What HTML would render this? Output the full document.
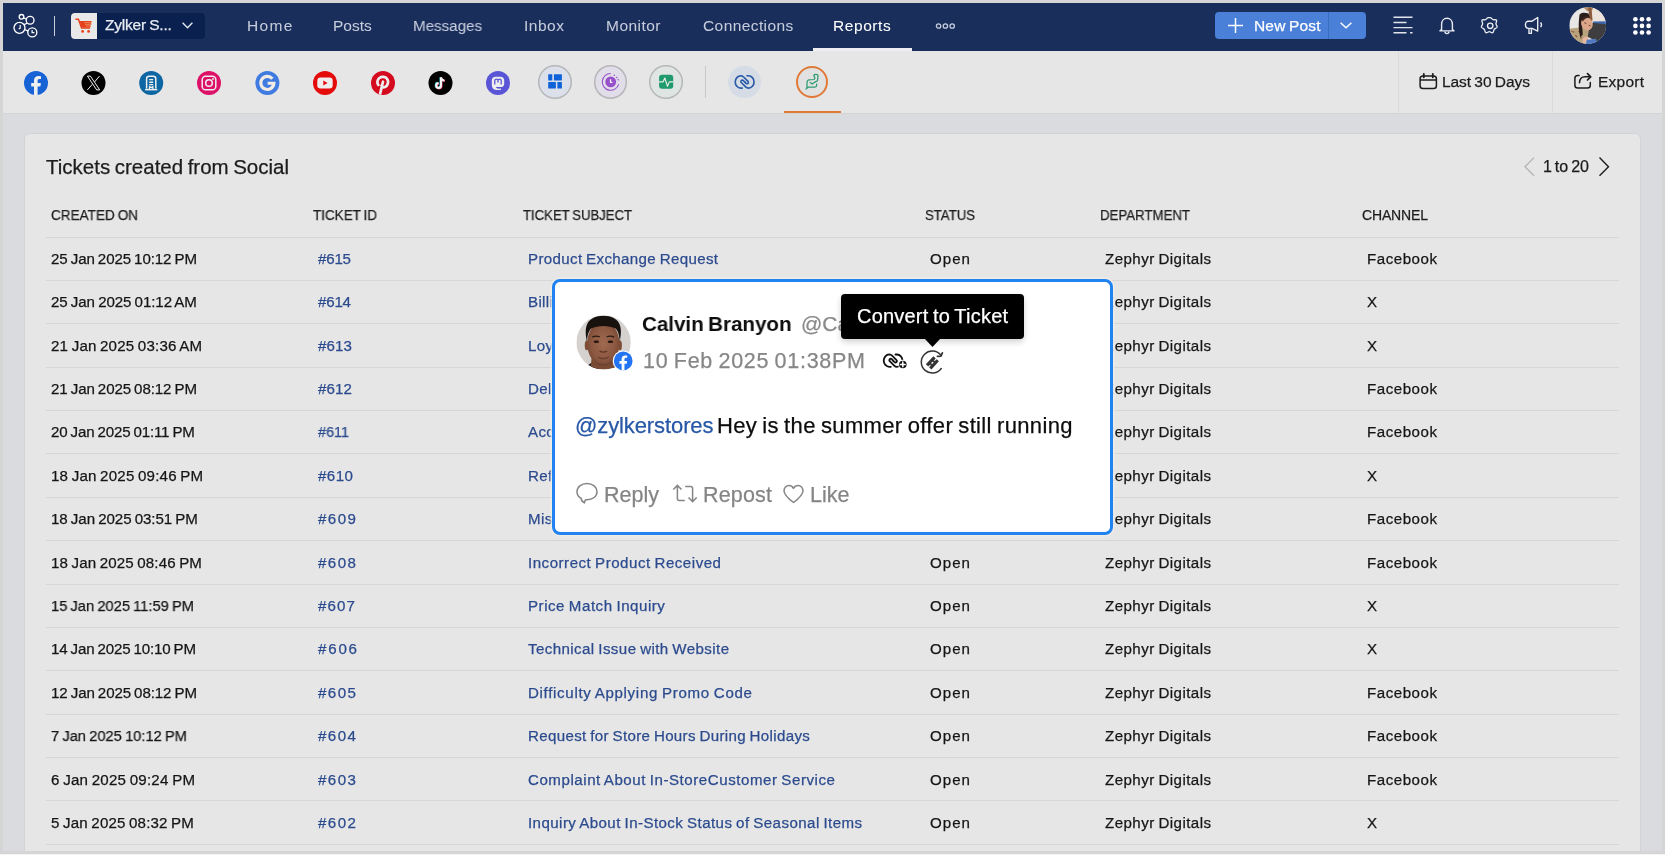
<!DOCTYPE html>
<html lang="en"><head>
<meta charset="utf-8">
<title>Zoho Social - Reports</title>
<style>
*{box-sizing:border-box;margin:0;padding:0}
html,body{width:1665px;height:855px;overflow:hidden}
body{background:#dadbde;font-family:"Liberation Sans",sans-serif;position:relative;color:#1c1c1c}
#root{position:absolute;left:0;top:0;width:1665px;height:855px}
.abs{position:absolute}
.t{word-spacing:-.06em;will-change:transform;-webkit-text-stroke:.25px;position:absolute;white-space:nowrap;line-height:20px;height:20px;margin-top:-10px;transform-origin:0 50%}
.frame{position:absolute;background:#d5d5d5;z-index:50}
#nav{position:absolute;left:0;top:0;width:1665px;height:50.5px;background:#1a2e5b}
#tool{position:absolute;left:0;top:50.5px;width:1665px;height:63.500px;background:#e6e6e6;border-bottom:1px solid #d4d4d7}
#card{position:absolute;left:25px;top:133.5px;width:1615px;height:740px;background:#e6e6e6;border-radius:5px;box-shadow:0 0 0 1px rgba(0,0,0,.035)}
.nv{color:#c5ccdc;font-size:15.5px;-webkit-text-stroke:.05px}
.hd{font-size:14px;color:#1f1f1f}
.sep{position:absolute;left:46px;width:1573px;height:1px;background:#d6d6d6}
.c{font-size:15.100px;color:#151515;letter-spacing:.35px}
.lk{color:#2c4b8e}
svg{position:absolute;overflow:visible}
</style>
</head>
<body>
<div id="root">
<div class="frame" style="left:0;top:0;width:1665px;height:3px"></div>
<div class="frame" style="left:0;top:851px;width:1665px;height:4px"></div>
<div class="frame" style="left:0;top:854px;width:1665px;height:1px;background:#f4f4f4;z-index:51"></div>
<div class="frame" style="left:0;top:0;width:3px;height:855px"></div>
<div class="frame" style="left:1662px;top:0;width:3px;height:855px"></div>

<div id="nav"></div>
<!-- logo -->
<svg style="left:12px;top:13px" width="27" height="25" viewBox="0 0 27 25" fill="none" stroke="#fff" stroke-width="1.350">
<circle cx="9.500" cy="3.800" r="2.300"></circle><circle cx="18.100" cy="7.200" r="3.900"></circle><circle cx="7.500" cy="14.800" r="5.500"></circle><circle cx="20.300" cy="19.400" r="4.500"></circle>
<path d="M11.600 4.900l2.900 1.100M12.600 16.500l3.600 1.600M15.200 10.200l-3.200 1.400" stroke-width="1.200"></path>
<path d="M8.200 12v3.200l-1.500.8M20.100 16.900v2.700h2.300" stroke-width="1.200"></path>
</svg>
<div class="abs" style="left:53.5px;top:15.5px;width:1.3px;height:20px;background:#c9cfdd"></div>
<!-- brand -->
<div class="abs" style="left:71px;top:12.5px;width:134px;height:26px;background:#0a2150;border-radius:4px"></div>
<div class="abs" style="left:71px;top:12.5px;width:25.5px;height:26px;background:#e9e9e9;border-radius:4px 0 0 4px"></div>
<svg style="left:75px;top:18px" width="18" height="16" viewBox="0 0 18 16">
<path d="M0.4 1.2h3l3.2 8.8h8.4" fill="none" stroke="#e5401b" stroke-width="1.5"></path>
<path d="M4.6 3h12l-1.4 6.6H6.6z" fill="#e5401b"></path>
<path d="M9 4.6h8M10 6.3h7M11 8h5" stroke="#f0a070" stroke-width=".7"></path>
<circle cx="7.6" cy="13.4" r="1.4" fill="#e5401b"></circle><circle cx="13.6" cy="13.4" r="1.4" fill="#e5401b"></circle>
</svg>
<span class="t" style="left: 105px; top: 24.5px; font-size: 15.5px; color: rgb(232, 235, 242); letter-spacing: -0.2px;">Zylker S...</span>
<svg style="left:182px;top:22px" width="11" height="7" viewBox="0 0 11 7" fill="none" stroke="#e3e7ef" stroke-width="1.4"><path d="M.6.8l4.9 5 4.9-5"></path></svg>
<!-- menu -->
<span class="t nv" style="left: 246.5px; top: 25.5px; letter-spacing: 1.38px;">Home</span>
<span class="t nv" style="left: 333px; top: 25.5px; letter-spacing: -0.02px;">Posts</span>
<span class="t nv" style="left: 413px; top: 25.5px; letter-spacing: 0px; transform: scaleX(0.977);">Messages</span>
<span class="t nv" style="left: 524px; top: 25.5px; letter-spacing: 0.52px;">Inbox</span>
<span class="t nv" style="left: 605.5px; top: 25.5px; letter-spacing: 0.47px;">Monitor</span>
<span class="t nv" style="left: 702.5px; top: 25.5px; letter-spacing: 0.41px;">Connections</span>
<span class="t nv" style="left: 833.4px; top: 25.5px; color: rgb(255, 255, 255); letter-spacing: 0.57px;">Reports</span>
<div class="abs" style="left:813px;top:48px;width:99px;height:2.5px;background:#eceef2"></div>
<svg style="left:935px;top:22px" width="21" height="8" viewBox="0 0 21 8" fill="none" stroke="#c5ccdc" stroke-width="1.3"><circle cx="3.6" cy="4" r="2.2"></circle><circle cx="10.4" cy="4" r="2.2"></circle><circle cx="17.2" cy="4" r="2.2"></circle></svg>
<!-- new post -->
<div class="abs" style="left:1215px;top:12.300px;width:151px;height:26.800px;background:#4a80d8;border-radius:4px"></div>
<div class="abs" style="left:1328px;top:12.300px;width:1px;height:26.800px;background:#3a6cc0"></div>
<svg style="left:1228px;top:18px" width="15" height="15" viewBox="0 0 15 15" stroke="#fff" stroke-width="1.5"><path d="M7.5 0v15M0 7.5h15"></path></svg>
<span class="t" style="left: 1254px; top: 25.5px; font-size: 15.5px; color: rgb(255, 255, 255); letter-spacing: 0.16px;">New Post</span>
<svg style="left:1340px;top:22px" width="12" height="7" viewBox="0 0 12 7" fill="none" stroke="#fff" stroke-width="1.4"><path d="M.6.8l5.4 5 5.4-5"></path></svg>
<!-- list -->
<svg style="left: 1393px; top: 16px;" width="20" height="18" viewBox="-0.5 -0.3 20 18" stroke="#e3e6ee" stroke-width="1.400"><path d="M0 1h19M0 6.200h13M0 11.300h19M0 16.400h13M16.600 16.400h2.400"></path></svg>
<!-- bell -->
<svg style="left:1438px;top:16px" width="18" height="19" viewBox="0 0 18 19" fill="none" stroke="#e8ebf2" stroke-width="1.4" stroke-linejoin="round"><path d="M3.6 13.6V8.2c0-3.4 2.3-5.9 5.4-5.9s5.4 2.500 5.400 5.900v5.400l1.600 1.300H2z"></path><path d="M7 15.600c0 1.200.9 2 2 2s2-.8 2-2"></path></svg>
<!-- gear -->
<svg style="left: 1480px; top: 16px;" width="19" height="19" viewBox="-0.7 -0.3 19 19" fill="none" stroke="#e8ebf2" stroke-width="1.4" stroke-linejoin="round"><path d="M9.500 1.100c1.300 0 1.800 1.900 3 2.300 1.200.4 2.900-.6 3.600.500.700 1.100-.6 2.500-.6 3.700 0 1.200 1.600 2.400 1.300 3.600-.4 1.200-2.300 1.300-3.100 2.300-.8 1-.4 2.900-1.600 3.500-1.200.500-2.300-1-3.600-1s-2.400 1.500-3.600 1c-1.200-.6-.8-2.500-1.600-3.500s-2.700-1.100-3.100-2.300c-.3-1.200 1.300-2.400 1.300-3.600 0-1.200-1.300-2.600-.6-3.700.7-1.100 2.400-.1 3.600-.5 1.200-.4 1.700-2.300 3-2.300z" transform="translate(.5 .2) scale(.95)"></path><circle cx="9.500" cy="9.500" r="2.700"></circle></svg>
<!-- megaphone -->
<svg style="left:1524px;top:16px" width="20" height="19" viewBox="0 0 20 19" fill="none" stroke="#e8ebf2" stroke-width="1.400" stroke-linejoin="round"><path d="M13.700 1.500v13.600L8 12.400H4.300C2.600 12.400 1.500 11 1.500 9.300v-1c0-1.700 1.100-3.100 2.800-3.100H8z"></path><path d="M5 12.600v4.800h2.400v-4.600M16.600 6.300c.9 1.200.9 3.600 0 4.800"></path></svg>
<!-- avatar -->
<svg style="left: 1569px; top: 7px;" width="37" height="37" viewBox="-0.3 -0.2 37 37">
<defs><clipPath id="avc"><circle cx="18.400" cy="18.400" r="18.400"></circle></clipPath></defs>
<g clip-path="url(#avc)"><rect width="37" height="37" fill="#e9e7e5"></rect>
<rect x="22" y="0" width="15" height="16" fill="#ece3db"></rect>
<path d="M14 0h10l-1 3-5 1z" fill="#b08a62"></path>
<path d="M19 0h3.200l1 13.500h-3.200z" fill="#8d5b3d"></path>
<path d="M0 21.500l12-1.500 8 3-1 8-5 6H0z" fill="#b9a37e"></path>
<path d="M2 24l3 1M6 28l2 2M11 31l2-1M4 31l1 2M9 24l2 1" stroke="#8a5a3a" stroke-width="1.200"></path>
<path d="M23.500 14.300l13.500-.3v3l-13 0z" fill="#3f68b0"></path>
<path d="M23.200 15.500l14 1.500v14l-8.500 4-10.300-5.500 1.200-6.500z" fill="#3e3e40"></path>
<path d="M10.200 7.500c1.500-2 5-2.300 9-1.200l1.300 4.500-6 2.500-1.500 7 .5 7-2.500 3c-1.500-6-2-12-1.300-18z" fill="#2a1c18"></path>
<ellipse cx="17.600" cy="16.600" rx="5.600" ry="6.600" fill="#dda68a" transform="rotate(-28 17.600 16.600)"></ellipse>
<path d="M12.500 11.500c2-2.500 5.500-3.600 8-1.500-3 .3-5.500 1.600-7 4.500z" fill="#3a2620"></path>
<path d="M15 15.500l2 .8M19.500 18l1.800.8" stroke="#5a3528" stroke-width=".9"></path>
<path d="M13.500 30.500l4.500-1.500 1 3-3 5h-3z" fill="#e6b79c"></path>
<path d="M17.500 32.500l9-1 2 5.500H16.500z" fill="#4f7ac2"></path>
</g></svg>
<!-- grid -->
<svg style="left:1632px;top:16px" width="20" height="20" viewBox="0 0 20 20" fill="#fff"><circle cx="3.400" cy="3.300" r="2.300"></circle><circle cx="10" cy="3.300" r="2.300"></circle><circle cx="16.600" cy="3.300" r="2.300"></circle><circle cx="3.400" cy="9.900" r="2.300"></circle><circle cx="10" cy="9.900" r="2.300"></circle><circle cx="16.600" cy="9.900" r="2.300"></circle><circle cx="3.400" cy="16.500" r="2.300"></circle><circle cx="10" cy="16.500" r="2.300"></circle><circle cx="16.600" cy="16.500" r="2.300"></circle></svg>
<!--NAVEND-->
<div id="tool">

</div>
<div id="card"></div>
<!--TOOLITEMS-->
<!-- facebook -->
<svg style="left:24px;top:71px" width="24" height="24" viewBox="0 0 24 24"><circle cx="12" cy="12" r="12" fill="#1763d6"></circle><path d="M13.600 24v-8.600h2.800l.5-3.300h-3.300V9.900c0-1 .5-1.800 1.900-1.800h1.500V5.300s-1.300-.3-2.600-.3c-2.700 0-4.400 1.700-4.400 4.500v2.600H7.200v3.300H10V24z" fill="#eee"></path></svg>
<!-- x -->
<svg style="left: 81px; top: 71px;" width="24" height="24" viewBox="-0.5 0 24 24"><circle cx="12" cy="12" r="12" fill="#000"></circle><path d="M5.900 5.100h3l9.300 13.800h-3zM18 5.100l-5 5.900M10.800 13.300L5.900 18.900" fill="none" stroke="#eee" stroke-width="1"></path></svg>
<!-- linkedin/company -->
<svg style="left: 139px; top: 71px;" width="24" height="24" viewBox="-0.2 0 24 24"><circle cx="12" cy="12" r="12" fill="#0b66a3"></circle><path d="M7.400 17.600V7.700c0-1.500 1-2.500 2.500-2.500h4.200c1.500 0 2.500 1 2.500 2.500v9.900" fill="none" stroke="#eee" stroke-width="1.500"></path><path d="M5.900 18.600h12.200" stroke="#eee" stroke-width="1.600"></path><path d="M10.300 18v-2.400l1.700 1 1.700-1V18" fill="none" stroke="#eee" stroke-width="1.200"></path><path d="M10 8.600h4M10 11.200h4M10 13.600h4" stroke="#eee" stroke-width="1.400"></path></svg>
<!-- instagram -->
<svg style="left:197px;top:71px" width="24" height="24" viewBox="0 0 24 24"><circle cx="12" cy="12" r="12" fill="#dd1168"></circle><rect x="5.200" y="5.200" width="13.600" height="13.600" rx="3.400" fill="none" stroke="#eee" stroke-width="1.500"></rect><circle cx="12" cy="12" r="3.300" fill="none" stroke="#eee" stroke-width="1.500"></circle><circle cx="16" cy="8" r=".95" fill="#eee"></circle></svg>
<!-- google -->
<svg style="left: 255px; top: 71px;" width="24" height="24" viewBox="-0.4 0 24 24"><circle cx="12" cy="12" r="12" fill="#3f7be0"></circle><path d="M17 7.700A6.550 6.550 0 1 0 18.500 12.300H12.200" fill="none" stroke="#f3ece4" stroke-width="3.100"></path></svg>
<!-- youtube -->
<svg style="left:313px;top:71px" width="24" height="24" viewBox="0 0 24 24"><circle cx="12" cy="12" r="12" fill="#e60b0b"></circle><rect x="4.300" y="6.600" width="15.400" height="11" rx="3.300" fill="#eee"></rect><path d="M10.300 9.500v4.900l4.300-2.450z" fill="#e60b0b"></path></svg>
<!-- pinterest -->
<svg style="left:371px;top:71px" width="24" height="24" viewBox="0 0 24 24"><defs><clipPath id="pnc"><circle cx="12" cy="12" r="12"></circle></clipPath></defs><circle cx="12" cy="12" r="12" fill="#d40a1f"></circle><g clip-path="url(#pnc)"><path d="M8.800 24l3.200-13.300M7.300 13.900c-1.500-2-1.100-5.200 1.100-6.900 2.500-1.900 6.500-1.400 8 1.300 1.400 2.600.3 6.700-2.400 7.700-1.600.6-3-.1-3.500-1.200" fill="none" stroke="#eee" stroke-width="2.700" stroke-linecap="round"></path></g></svg>
<!-- tiktok -->
<svg style="left:428px;top:71px" width="24" height="24" viewBox="-.5 0 24 24"><circle cx="12" cy="12" r="12" fill="#000"></circle><g fill="none" stroke-width="2"><path d="M12.500 6.300v8.300a2.400 2.400 0 1 1-2.400-2.400M12.500 6.500c.3 1.900 1.500 3 3.400 3.100" stroke="#35d0e0" transform="translate(-.5 -.4)"></path><path d="M12.500 6.300v8.300a2.400 2.400 0 1 1-2.400-2.400M12.500 6.500c.3 1.900 1.500 3 3.400 3.100" stroke="#f0406a" transform="translate(.5 .4)"></path><path d="M12.500 6.300v8.300a2.400 2.400 0 1 1-2.400-2.400M12.500 6.500c.3 1.900 1.500 3 3.400 3.100" stroke="#f5f5f5"></path></g></svg>
<!-- mastodon -->
<svg style="left:486px;top:71px" width="24" height="24" viewBox="0 0 24 24"><circle cx="12" cy="12" r="12" fill="#5a55d6"></circle><path d="M5.800 9.400c0-2.300 1.500-3.700 3.800-3.700h4.800c2.300 0 3.800 1.400 3.800 3.700v3.500c0 2-1.300 3.200-3.400 3.200h-4.900c.3 1.400 1.800 1.800 5.100 1.500v1.100c-4.900.9-9.200.2-9.200-5.300z" fill="#eee"></path><path d="M8.800 13.400V9.600c0-1.900 3.200-1.900 3.200 0v1.900m0-1.900c0-1.900 3.200-1.900 3.200 0v3.800" fill="none" stroke="#5a55d6" stroke-width="1.300"></path></svg>
<!-- dashboards -->
<div class="abs" style="left:538.100px;top:64.900px;width:33.700px;height:33.700px;border-radius:50%;background:#dbe0ea;box-shadow:inset 0 0 0 1.500px #b6b6b8"></div>
<svg style="left:548px;top:74px" width="14" height="15" viewBox="0 0 14 15" fill="#0f62d8"><rect x=".2" y=".2" width="4.100" height="6.200" rx=".5"></rect><rect x="5.900" y=".2" width="8" height="6.200" rx=".5"></rect><rect x=".2" y="7.900" width="7.700" height="6.500" rx=".5"></rect><rect x="9.400" y="7.900" width="4.500" height="6.500" rx=".5"></rect></svg>
<div class="abs" style="left:593.800px;top:64.900px;width:33.700px;height:33.700px;border-radius:50%;background:#e2dee9;box-shadow:inset 0 0 0 1.500px #b6b6b8"></div>
<svg style="left:602px;top:73px" width="18" height="18" viewBox="0 0 18 18"><circle cx="8.700" cy="8.900" r="5.400" fill="#9650cc"></circle><path d="M8.700 .5A8.400 8.400 0 1 0 16.700 11.400" fill="none" stroke="#9650cc" stroke-width="1.100"></path><circle cx="12.300" cy="2.300" r=".75" fill="#9650cc"></circle><circle cx="14.700" cy="4.400" r=".75" fill="#9650cc"></circle><circle cx="16.200" cy="6.800" r=".75" fill="#9650cc"></circle><path d="M8.500 6.300v3h2" fill="none" stroke="#eee" stroke-width="1.300"></path></svg>
<div class="abs" style="left:649.100px;top:64.900px;width:33.700px;height:33.700px;border-radius:50%;background:#dee5e2;box-shadow:inset 0 0 0 1.500px #b6b6b8"></div>
<svg style="left: 659px; top: 74px;" width="15" height="15" viewBox="0 -0.7 15 15"><rect x=".1" y="0" width="14.100" height="14.100" rx="2.800" fill="#1f9a6c"></rect><path d="M0 7.200h4l1.800-3.900 2.700 8.400 1.800-4.500h4" fill="none" stroke="#e6ebe8" stroke-width="1.200" stroke-linejoin="round"></path></svg>
<div class="abs" style="left:705px;top:66px;width:1.200px;height:31.500px;background:#c9c9c9"></div>
<!-- link -->
<div class="abs" style="left:728px;top:65.500px;width:32.500px;height:32.500px;border-radius:50%;background:#d5dce6"></div>
<svg style="left:732px;top:72px" width="25" height="20" viewBox="0 0 25 20" fill="none" stroke="#2a5aa8" stroke-width="1.650" stroke-linecap="round" stroke-linejoin="round"><path id="lkh" d="M10.300 16.100H8.800A5.800 6.180 0 0 1 8.800 3.750C10 3.750 10.800 4.200 11.600 5L16 9.400A1.380 1.380 0 0 1 14.050 11.360L12.630 9.940"></path><use href="#lkh" transform="rotate(180 12.630 9.940)"></use></svg>
<!-- active -->
<div class="abs" style="left:796px;top:65.500px;width:32.300px;height:32.500px;border-radius:50%;background:#e1e1e1;border:2px solid #e07a38"></div>
<svg style="left:792px;top:62px" width="40" height="40" viewBox="0 0 40 40" fill="none" stroke="#2e9c72" stroke-width="1.250" stroke-linejoin="round" stroke-linecap="round"><path d="M22 13.300C22.300 12.600 23 12.300 23.900 12.300 25.300 12.300 26.100 13 26 14.200L25.500 18.300C25.300 19.200 24.500 19.500 23.600 19.600"></path><path d="M22 13.300C21.800 14.300 22.300 15 22.900 15.700 22.900 16.800 22.500 17.400 21.600 17.500L16.800 17.900C15.800 18 15.300 18.600 15.100 19.800L14.900 25.500 14 27 16.400 25H23C24 25 24.600 24.400 24.600 23.500V22"></path><path d="M18.200 20.400L20.200 22 23.600 19.600"></path></svg>
<div class="abs" style="left:784px;top:110.500px;width:57px;height:2.500px;background:#e27a35"></div>
<!-- right -->
<div class="abs" style="left:1398px;top:51px;width:1px;height:62.500px;background:#dadada"></div>
<div class="abs" style="left:1552px;top:51px;width:1px;height:62.500px;background:#dadada"></div>
<svg style="left:1414px;top:68px" width="30" height="28" viewBox="0 0 30 28" fill="none" stroke="#1c1c1c" stroke-width="1.500" stroke-linecap="round"><rect x="6.100" y="7.900" width="16.300" height="12.600" rx="2.800"></rect><path d="M6.100 12H22.400" stroke-linecap="butt"></path><path d="M9.800 5.800V9.300M18.800 5.800V9.300" stroke-width="1.800"></path></svg>
<span class="t" style="left: 1442px; top: 82px; font-size: 15.5px; color: rgb(28, 28, 28); letter-spacing: -0.06px;">Last 30 Days</span>
<svg style="left:1568px;top:68px" width="30" height="28" viewBox="0 0 30 28" fill="none" stroke="#1c1c1c" stroke-width="1.500" stroke-linecap="round" stroke-linejoin="round"><path d="M11.100 7.400H9.700C8 7.400 6.900 8.500 6.900 10.200V17.200C6.900 18.900 8 20 9.700 20H19.500C21.200 20 22.300 18.900 22.300 17.200V14.400"></path><path d="M11.500 14.700C11.700 11 13.600 8.800 17 8.800H22"></path><path d="M19.500 5.600L22.700 8.800 19.500 12" stroke-width="1.700"></path></svg>
<span class="t" style="left: 1598px; top: 82px; font-size: 15.5px; color: rgb(28, 28, 28); letter-spacing: 0.24px;">Export</span>
<!--TOOLEND-->
<!--TABLE-->
<span class="t" style="left: 46px; top: 166.8px; font-size: 20.5px; color: rgb(28, 28, 28); letter-spacing: 0.01px;">Tickets created from Social</span>
<svg style="left:1524px;top:157px" width="11" height="20" viewBox="0 0 11 20" fill="none" stroke="#b4b4b4" stroke-width="1.300"><path d="M10 .6L1 9.700l9 9.100"></path></svg>
<span class="t" style="left: 1543px; top: 166.6px; font-size: 16px; word-spacing: -0.1em; color: rgb(28, 28, 28); letter-spacing: 0.04px;">1 to 20</span>
<svg style="left: 1598px; top: 157px;" width="11" height="20" viewBox="-0.5 0 11 20" fill="none" stroke="#1c1c1c" stroke-width="1.400"><path d="M1 .6l9 9.100-9 9.100"></path></svg>
<span class="t hd" style="left: 51px; top: 214.8px; letter-spacing: 0px; transform: scaleX(0.968);">CREATED ON</span>
<span class="t hd" style="left: 313px; top: 214.8px; letter-spacing: 0px; transform: scaleX(0.961);">TICKET ID</span>
<span class="t hd" style="left: 523px; top: 214.8px; letter-spacing: 0px; transform: scaleX(0.937);">TICKET SUBJECT</span>
<span class="t hd" style="left: 925px; top: 214.8px; letter-spacing: 0px; transform: scaleX(0.941);">STATUS</span>
<span class="t hd" style="left: 1100px; top: 214.8px; letter-spacing: 0px; transform: scaleX(0.946);">DEPARTMENT</span>
<span class="t hd" style="left: 1362px; top: 214.8px; letter-spacing: -0.15px;">CHANNEL</span>
<div class="sep" style="top:236.55px"></div>
<span class="t c" style="left: 51px; top: 259.3px; letter-spacing: -0.12px;">25 Jan 2025 10:12 PM</span>
<span class="t c lk" style="left: 318px; top: 259.3px; letter-spacing: -0.19px;">#615</span>
<span class="t c lk" style="left: 528px; top: 259.3px; letter-spacing: 0.35px;">Product Exchange Request</span>
<span class="t c" style="left: 930px; top: 259.3px; letter-spacing: 1.02px;">Open</span>
<span class="t c" style="left: 1105px; top: 259.3px; letter-spacing: 0.45px;">Zephyr Digitals</span>
<span class="t c" style="left: 1367px; top: 259.3px; letter-spacing: 0.53px;">Facebook</span>
<div class="sep" style="top:279.93px"></div>
<span class="t c" style="left: 51px; top: 301.67px; letter-spacing: -0.08px;">25 Jan 2025 01:12 AM</span>
<span class="t c lk" style="left: 318px; top: 301.67px; letter-spacing: -0.19px;">#614</span>
<span class="t c lk" style="left:528px;top:301.67px">Billing Discrepancy on Order</span>
<span class="t c" style="left: 930px; top: 301.67px; letter-spacing: 1.02px;">Open</span>
<span class="t c" style="left: 1105px; top: 301.67px; letter-spacing: 0.45px;">Zephyr Digitals</span>
<span class="t c" style="left: 1367px; top: 301.67px; letter-spacing: -0.08px;">X</span>
<div class="sep" style="top:323.3px"></div>
<span class="t c" style="left: 51px; top: 346.05px; letter-spacing: 0.19px;">21 Jan 2025 03:36 AM</span>
<span class="t c lk" style="left: 318px; top: 346.05px; letter-spacing: 0.14px;">#613</span>
<span class="t c lk" style="left:528px;top:346.05px">Loyalty Points Not Credited</span>
<span class="t c" style="left: 930px; top: 346.05px; letter-spacing: 1.02px;">Open</span>
<span class="t c" style="left: 1105px; top: 346.05px; letter-spacing: 0.45px;">Zephyr Digitals</span>
<span class="t c" style="left: 1367px; top: 346.05px; letter-spacing: -0.08px;">X</span>
<div class="sep" style="top:366.68px"></div>
<span class="t c" style="left: 51px; top: 389.43px; letter-spacing: -0.12px;">21 Jan 2025 08:12 PM</span>
<span class="t c lk" style="left: 318px; top: 389.43px; letter-spacing: 0.14px;">#612</span>
<span class="t c lk" style="left:528px;top:389.43px">Delayed Delivery Complaint</span>
<span class="t c" style="left: 930px; top: 389.43px; letter-spacing: 1.02px;">Open</span>
<span class="t c" style="left: 1105px; top: 389.43px; letter-spacing: 0.45px;">Zephyr Digitals</span>
<span class="t c" style="left: 1367px; top: 389.43px; letter-spacing: 0.53px;">Facebook</span>
<div class="sep" style="top:410.05px"></div>
<span class="t c" style="left: 51px; top: 431.8px; letter-spacing: -0.17px;">20 Jan 2025 01:11 PM</span>
<span class="t c lk" style="left: 318px; top: 431.8px; letter-spacing: 0px; transform: scaleX(0.955);">#611</span>
<span class="t c lk" style="left:528px;top:431.8px">Account Login Problem</span>
<span class="t c" style="left: 930px; top: 431.8px; letter-spacing: 1.02px;">Open</span>
<span class="t c" style="left: 1105px; top: 431.8px; letter-spacing: 0.45px;">Zephyr Digitals</span>
<span class="t c" style="left: 1367px; top: 431.8px; letter-spacing: 0.53px;">Facebook</span>
<div class="sep" style="top:453.43px"></div>
<span class="t c" style="left: 51px; top: 476.17px; letter-spacing: 0.2px;">18 Jan 2025 09:46 PM</span>
<span class="t c lk" style="left: 318px; top: 476.17px; letter-spacing: 0.47px;">#610</span>
<span class="t c lk" style="left:528px;top:476.17px">Refund Status Enquiry</span>
<span class="t c" style="left: 930px; top: 476.17px; letter-spacing: 1.02px;">Open</span>
<span class="t c" style="left: 1105px; top: 476.17px; letter-spacing: 0.45px;">Zephyr Digitals</span>
<span class="t c" style="left: 1367px; top: 476.17px; letter-spacing: -0.08px;">X</span>
<div class="sep" style="top:496.8px"></div>
<span class="t c" style="left: 51px; top: 518.55px; letter-spacing: -0.07px;">18 Jan 2025 03:51 PM</span>
<span class="t c lk" style="left: 318px; top: 518.55px; letter-spacing: 1.47px;">#609</span>
<span class="t c lk" style="left:528px;top:518.55px">Missing Item in Package</span>
<span class="t c" style="left: 930px; top: 518.55px; letter-spacing: 1.02px;">Open</span>
<span class="t c" style="left: 1105px; top: 518.55px; letter-spacing: 0.45px;">Zephyr Digitals</span>
<span class="t c" style="left: 1367px; top: 518.55px; letter-spacing: 0.53px;">Facebook</span>
<div class="sep" style="top:540.17px"></div>
<span class="t c" style="left: 51px; top: 562.93px; letter-spacing: 0.14px;">18 Jan 2025 08:46 PM</span>
<span class="t c lk" style="left: 318px; top: 562.93px; letter-spacing: 1.47px;">#608</span>
<span class="t c lk" style="left: 528px; top: 562.93px; letter-spacing: 0.51px;">Incorrect Product Received</span>
<span class="t c" style="left: 930px; top: 562.93px; letter-spacing: 1.02px;">Open</span>
<span class="t c" style="left: 1105px; top: 562.93px; letter-spacing: 0.45px;">Zephyr Digitals</span>
<span class="t c" style="left: 1367px; top: 562.93px; letter-spacing: 0.53px;">Facebook</span>
<div class="sep" style="top:583.55px"></div>
<span class="t c" style="left: 51px; top: 606.3px; letter-spacing: 0px; transform: scaleX(0.972);">15 Jan 2025 11:59 PM</span>
<span class="t c lk" style="left: 318px; top: 606.3px; letter-spacing: 1.14px;">#607</span>
<span class="t c lk" style="left: 528px; top: 606.3px; letter-spacing: 0.53px;">Price Match Inquiry</span>
<span class="t c" style="left: 930px; top: 606.3px; letter-spacing: 1.02px;">Open</span>
<span class="t c" style="left: 1105px; top: 606.3px; letter-spacing: 0.45px;">Zephyr Digitals</span>
<span class="t c" style="left: 1367px; top: 606.3px; letter-spacing: -0.08px;">X</span>
<div class="sep" style="top:626.92px"></div>
<span class="t c" style="left: 51px; top: 648.67px; letter-spacing: -0.17px;">14 Jan 2025 10:10 PM</span>
<span class="t c lk" style="left: 318px; top: 648.67px; letter-spacing: 1.81px;">#606</span>
<span class="t c lk" style="left: 528px; top: 648.67px; letter-spacing: 0.41px;">Technical Issue with Website</span>
<span class="t c" style="left: 930px; top: 648.67px; letter-spacing: 1.02px;">Open</span>
<span class="t c" style="left: 1105px; top: 648.67px; letter-spacing: 0.45px;">Zephyr Digitals</span>
<span class="t c" style="left: 1367px; top: 648.67px; letter-spacing: -0.08px;">X</span>
<div class="sep" style="top:670.3px"></div>
<span class="t c" style="left: 51px; top: 693.05px; letter-spacing: -0.12px;">12 Jan 2025 08:12 PM</span>
<span class="t c lk" style="left: 318px; top: 693.05px; letter-spacing: 1.47px;">#605</span>
<span class="t c lk" style="left: 528px; top: 693.05px; letter-spacing: 0.68px;">Difficulty Applying Promo Code</span>
<span class="t c" style="left: 930px; top: 693.05px; letter-spacing: 1.02px;">Open</span>
<span class="t c" style="left: 1105px; top: 693.05px; letter-spacing: 0.45px;">Zephyr Digitals</span>
<span class="t c" style="left: 1367px; top: 693.05px; letter-spacing: 0.53px;">Facebook</span>
<div class="sep" style="top:713.67px"></div>
<span class="t c" style="left: 51px; top: 736.43px; letter-spacing: 0px; transform: scaleX(0.972);">7 Jan 2025 10:12 PM</span>
<span class="t c lk" style="left: 318px; top: 736.43px; letter-spacing: 1.47px;">#604</span>
<span class="t c lk" style="left: 528px; top: 736.43px; letter-spacing: 0.34px;">Request for Store Hours During Holidays</span>
<span class="t c" style="left: 930px; top: 736.43px; letter-spacing: 1.02px;">Open</span>
<span class="t c" style="left: 1105px; top: 736.43px; letter-spacing: 0.45px;">Zephyr Digitals</span>
<span class="t c" style="left: 1367px; top: 736.43px; letter-spacing: 0.53px;">Facebook</span>
<div class="sep" style="top:757.05px"></div>
<span class="t c" style="left: 51px; top: 779.8px; letter-spacing: 0.23px;">6 Jan 2025 09:24 PM</span>
<span class="t c lk" style="left: 318px; top: 779.8px; letter-spacing: 1.47px;">#603</span>
<span class="t c lk" style="left: 528px; top: 779.8px; letter-spacing: 0.54px;">Complaint About In-StoreCustomer Service</span>
<span class="t c" style="left: 930px; top: 779.8px; letter-spacing: 1.02px;">Open</span>
<span class="t c" style="left: 1105px; top: 779.8px; letter-spacing: 0.45px;">Zephyr Digitals</span>
<span class="t c" style="left: 1367px; top: 779.8px; letter-spacing: 0.53px;">Facebook</span>
<div class="sep" style="top:800.42px"></div>
<span class="t c" style="left: 51px; top: 823.17px; letter-spacing: 0.17px;">5 Jan 2025 08:32 PM</span>
<span class="t c lk" style="left: 318px; top: 823.17px; letter-spacing: 1.47px;">#602</span>
<span class="t c lk" style="left: 528px; top: 823.17px; letter-spacing: 0.43px;">Inquiry About In-Stock Status of Seasonal Items</span>
<span class="t c" style="left: 930px; top: 823.17px; letter-spacing: 1.02px;">Open</span>
<span class="t c" style="left: 1105px; top: 823.17px; letter-spacing: 0.45px;">Zephyr Digitals</span>
<span class="t c" style="left: 1367px; top: 823.17px; letter-spacing: -0.08px;">X</span>
<div class="sep" style="top:843.8px"></div>
<!--TABLEEND-->
<!--POPUP-->
<div class="abs" style="left:552px;top:279px;width:561px;height:256px;background:#fff;border:3px solid #2182f2;border-radius:8px;box-shadow:0 0 0 1.500px rgba(242,236,228,.85)"></div>
<!-- avatar -->
<svg style="left: 576px; top: 315px;" width="55" height="55" viewBox="-0.397 -0.199 54.6 54.6">
<defs><clipPath id="pvc"><circle cx="27" cy="27" r="27"></circle></clipPath>
<radialGradient id="fcg" cx=".5" cy=".5" r=".6"><stop offset="0" stop-color="#a06a50"></stop><stop offset=".6" stop-color="#8c5841"></stop><stop offset="1" stop-color="#70432f"></stop></radialGradient></defs>
<g clip-path="url(#pvc)"><rect width="54" height="54" fill="#d4d1ce"></rect>
<path d="M9 54c1-4 4-6.500 9-7.500l4 7.500z" fill="#1c1c1e"></path>
<path d="M45 54c-1-4-3-6-7-7l-3 7z" fill="#1c1c1e"></path>
<path d="M15.500 38h22.500l1 16H14z" fill="#7a4a35"></path>
<ellipse cx="10.300" cy="30" rx="2" ry="4.800" fill="#7d4c37"></ellipse><ellipse cx="43.200" cy="30" rx="2" ry="4.800" fill="#7d4c37"></ellipse>
<ellipse cx="26.700" cy="28" rx="16" ry="22" fill="url(#fcg)"></ellipse>
<path d="M10.400 26C8.500 17 8.500 9 14 4.500 18 1.300 22 .5 26.700.5s9 .8 12.800 4C45 9 45 17 43 26c-.4-5.500-1.300-9.500-3.700-12.500-7.500-3.800-17.500-3.800-25 0-2.400 3-3.500 7-3.900 12.500z" fill="#18120f"></path>
<path d="M15.800 21.800c2-1.200 5-1.300 7.500-.4M30 21.400c2.500-.9 5.500-.8 7.500.4" stroke="#2a1a14" stroke-width="1.300" fill="none"></path>
<ellipse cx="19.800" cy="26.300" rx="2.700" ry="1.200" fill="#23150f"></ellipse><ellipse cx="33.800" cy="26.300" rx="2.700" ry="1.200" fill="#23150f"></ellipse>
<path d="M23 35.500c2 1.600 5.500 1.600 7.500 0" stroke="#5b3424" stroke-width="1.300" fill="none"></path>
<path d="M21.500 41.500c3 1.800 7.500 1.800 10.500 0-2 2.400-8.500 2.400-10.500 0z" fill="#c48878" stroke="#5b3424" stroke-width=".7"></path>
<path d="M17 44c4 6 15 6 19.500 0-3 8-16 8-19.500 0z" fill="#5b3626" opacity=".55"></path>
</g></svg>
<svg style="left: 612px; top: 350px;" width="21" height="21" viewBox="-0.667 -0.381 20 20"><circle cx="10" cy="10" r="10" fill="#fff"></circle><circle cx="10" cy="10" r="8.900" fill="#2374f2"></circle><path d="M11.200 19v-6.400h2.100l.4-2.500h-2.500V8.500c0-.8.400-1.400 1.500-1.400h1.100V5s-1-.2-2-.2c-2 0-3.300 1.300-3.300 3.400v1.900H6.400v2.500h2.100V19z" fill="#fff"></path></svg>
<span class="t" style="left: 641.5px; top: 324px; font-size: 21px; font-weight: bold; -webkit-text-stroke: 0px; color: rgb(13, 13, 13); height: 28px; line-height: 28px; margin-top: -14px; letter-spacing: 0px; transform: scaleX(0.979);">Calvin Branyon</span>
<span class="t" style="left:800.500px;top:324px;font-size:21px;color:#8a8a8a;height:28px;line-height:28px;margin-top:-14px">@Calvin</span>
<span class="t" style="left: 642.5px; top: 361.4px; font-size: 21.5px; color: rgb(134, 134, 134); height: 28px; line-height: 28px; margin-top: -14px; letter-spacing: 0.73px;">10 Feb 2025 01:38PM</span>
<!-- link+ icon -->
<svg style="left: 880px; top: 350px;" width="28" height="20" viewBox="-0.5 -0.7 28 20" fill="none" stroke="#111" stroke-width="1.800" stroke-linecap="round" stroke-linejoin="round"><use href="#lkh"></use><use href="#lkh" transform="rotate(180 12.630 9.940)"></use><circle cx="22.300" cy="13.700" r="4.700" fill="#fff" stroke="none"></circle><circle cx="22.300" cy="13.700" r="3.750" fill="#111" stroke="none"></circle><path d="M22.300 11.400v4.600M20 13.700h4.600" stroke="#fff" stroke-width="1.500"></path></svg>
<!-- convert icon -->
<svg style="left:920px;top:350px" width="24" height="25" viewBox="0 0 24 25" fill="none" stroke="#333" stroke-width="1.500" stroke-linecap="round" stroke-linejoin="round"><path d="M20.780 5.080A11 11 0 1 0 21.230 18.520"></path><path d="M22.400 2.900L21 6.200 17.400 6.400" stroke-width="1.700"></path><g transform="translate(12.400 12.800) rotate(-47) translate(-5.500 -3.800)"><path d="M0 0H11V3.250H8.900A.55.55 0 0 0 8.900 4.350H11V7.600H0V4.350H2.100A.55.55 0 0 0 2.100 3.250H0Z" fill="#333" stroke="none"></path><ellipse cx="5.500" cy="3.800" rx="1.300" ry=".75" fill="#fff" stroke="none"></ellipse></g></svg>
<!-- tooltip -->
<div class="abs" style="left:841px;top:294px;width:183px;height:45px;background:#000;border-radius:4px;box-shadow:0 3px 6px rgba(0,0,0,.18)"></div>
<svg style="left: 924px; top: 338px;" width="16" height="9" viewBox="-0.5 -0.5 16 9"><path d="M0 0h16L8 8.500z" fill="#000"></path></svg>
<span class="t" style="left: 856.5px; top: 316px; font-size: 20px; color: rgb(255, 255, 255); height: 28px; line-height: 28px; margin-top: -14px; letter-spacing: 0.21px;">Convert to Ticket</span>
<!-- message -->
<span class="t" style="left: 574.7px; top: 426px; font-size: 22px; color: rgb(39, 87, 166); height: 30px; line-height: 30px; margin-top: -15px; letter-spacing: -0.1px;">@zylkerstores</span>
<span class="t" style="left: 717px; top: 426px; font-size: 22px; color: rgb(13, 13, 13); height: 30px; line-height: 30px; margin-top: -15px; letter-spacing: 0.36px;">Hey is the summer offer still running</span>
<!-- actions -->
<svg style="left: 576px; top: 482px;" width="22" height="22" viewBox="0 -0.5 22 22" fill="none" stroke="#858585" stroke-width="1.500" stroke-linejoin="round"><path d="M11 1C5.300 1 1 4.600 1 9.200c0 2.800 1.600 5.200 4.200 6.600-.1 1.200.9 3.400 3.300 4.600 0-1.200.3-2.400 1.200-3.100h1.300c5.700 0 10-3.500 10-8.100S16.700 1 11 1z"></path></svg>
<span class="t" style="left: 603.5px; top: 494.5px; font-size: 21.5px; color: rgb(133, 133, 133); height: 28px; line-height: 28px; margin-top: -14px; letter-spacing: 0.01px;">Reply</span>
<svg style="left: 672px; top: 484px;" width="25" height="18" viewBox="-0.5 -0.5 25 18" fill="none" stroke="#858585" stroke-width="1.500"><path d="M.8 5L4.900.9 9 5M4.900 1.200V14c0 1.300.7 2 2 2h5.400"></path><path d="M24.200 13l-4.100 4.100L16 13M20.100 16.800V4c0-1.300-.7-2-2-2h-5.400"></path></svg>
<span class="t" style="left: 702.5px; top: 494.5px; font-size: 21.5px; color: rgb(133, 133, 133); height: 28px; line-height: 28px; margin-top: -14px; letter-spacing: 0.18px;">Repost</span>
<svg style="left: 783px; top: 484px;" width="21" height="19" viewBox="0 -0.5 21 19" fill="none" stroke="#858585" stroke-width="1.500" stroke-linejoin="round"><path d="M10.500 18C5.500 14.200 1 10.600 1 6.200 1 3.300 3.200 1 5.900 1c1.900 0 3.600 1 4.600 2.800C11.500 2 13.200 1 15.100 1 17.800 1 20 3.300 20 6.200c0 4.400-4.500 8-9.500 11.800z"></path></svg>
<span class="t" style="left: 810px; top: 494.5px; font-size: 21.5px; color: rgb(133, 133, 133); height: 28px; line-height: 28px; margin-top: -14px; letter-spacing: 0.02px;">Like</span>
<!--POPUPEND-->
</div>


</body></html>
